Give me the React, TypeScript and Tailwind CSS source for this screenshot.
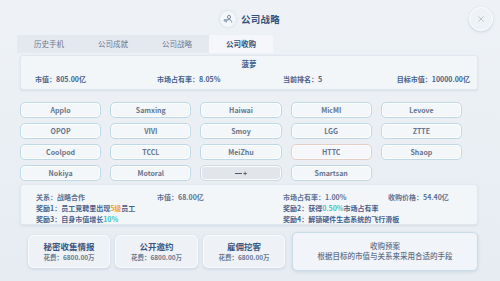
import { X } from 'lucide-react'

const tabs = ['历史手机', '公司成就', '公司战略', '公司收购']

const companies = [
  'Applo', 'Samxing', 'Haiwai', 'MicMI', 'Levove',
  'OPOP', 'VIVI', 'Smoy', 'LGG', 'ZTTE',
  'Coolpod', 'TCCL', 'MeiZhu', 'HTTC', 'Shaop',
  'Nokiya', 'Motoral', '—+', 'Smartsan',
]

const actions = [
  { title: '秘密收集情报', cost: '花费：6800.00万', w: 'w-[82px]' },
  { title: '公开邀约', cost: '花费：6800.00万', w: 'w-[83px]' },
  { title: '雇佣挖客', cost: '花费：6800.00万', w: 'w-[82px]' },
]

const TitleIcon = () => (
  <div className="w-[16px] h-[16px] rounded-full bg-[#f4f7fa] flex items-center justify-center shadow-[0_0_3px_rgba(150,170,190,0.4)]">
    <svg width="10" height="10" viewBox="0 0 10 10" fill="none" stroke="#6d7f96" strokeWidth="0.9">
      <circle cx="6" cy="3" r="1.6" />
      <path d="M3.2 8.6c0-1.8 1.2-3 2.8-3s2.8 1.2 2.8 3" />
      <circle cx="2" cy="6.4" r="0.9" />
      <path d="M2.8 6.1l1.4-0.6" />
    </svg>
  </div>
)

const CompanyButton = ({ name }: { name: string }) => {
  const empty = name === '—+'
  const warn = name === 'HTTC'
  return (
    <div
      className={`h-[16px] rounded-[5px] border flex items-center justify-center text-[7px] font-semibold shadow-[inset_0_0_0_1px_rgba(255,255,255,0.9)] ${
        empty
          ? 'bg-[#e2e6eb] border-[#d2d8de] text-[#4a5a70]'
          : warn
          ? 'bg-[#f5f7fa] border-[#e6cdc6] text-[#66758b]'
          : 'bg-[#f4f7fa] border-[#bdd8e6] text-[#66758b]'
      }`}
    >
      {empty ? (
        <span className="flex items-center gap-[1px]">
          <span className="w-[7px] h-[1px] bg-[#4a5a70]" />
          <span>+</span>
        </span>
      ) : (
        name
      )}
    </div>
  )
}

export default function App() {
  return (
    <div
      className="w-[500px] h-[281px] overflow-hidden bg-gradient-to-b from-[#eef2f6] to-[#e7ecf2] text-[#46608a]"
      style={{ fontFamily: '"Noto Sans CJK SC", "Noto Sans", sans-serif' }}
    >
      {/* Header */}
      <div className="relative h-[35px] flex items-center justify-center gap-[5px] pt-[3px]">
        <TitleIcon />
        <span className="text-[9.5px] font-bold text-[#34507a] tracking-[0.3px]">公司战略</span>
        <div className="absolute right-[7px] top-[7px] w-[24px] h-[24px] rounded-full bg-[#eef2f6] border border-white shadow-[0_1px_3px_rgba(140,160,185,0.35)] flex items-center justify-center">
          <X size={10} strokeWidth={1.5} className="text-[#a3adb9]" />
        </div>
      </div>

      {/* Tabs */}
      <div className="ml-[17px] flex h-[18px]">
        {tabs.map((t, i) => (
          <div
            key={t}
            className={`w-[64px] flex items-center justify-center text-[7.5px] ${
              i === 3
                ? 'bg-[#f5f7fa] text-[#34507a] font-bold rounded-t-[2px]'
                : 'bg-[#e4e9ef] text-[#6a7a8f]'
            }`}
          >
            {t}
          </div>
        ))}
      </div>

      {/* Target info */}
      <div className="mt-[2px] ml-[20px] w-[458px] h-[35px] rounded-[3px] bg-[#f3f6f9] border border-[#e1e7ee] shadow-[0_1px_2px_rgba(160,175,195,0.3)] flex flex-col">
        <div className="text-center text-[7.5px] font-semibold text-[#46608a] mt-[2px] leading-[12px]">菠萝</div>
        <div className="flex pl-[14px] pr-[7px] text-[7px] font-semibold leading-[10px] mt-[4px]">
          <span className="w-[122px]">市值：805.00亿</span>
          <span className="w-[126px]">市场占有率：8.05%</span>
          <span>当前排名：5</span>
          <span className="ml-auto">目标市值：10000.00亿</span>
        </div>
      </div>

      {/* Company grid */}
      <div className="mt-[12px] ml-[20px] w-[442px] grid grid-cols-5 gap-x-[9px] gap-y-[5px]">
        {companies.map(c => (
          <CompanyButton key={c} name={c} />
        ))}
      </div>

      {/* Selected info */}
      <div className="mt-[3px] ml-[20px] w-[458px] h-[41px] rounded-[3px] bg-[#f3f6f9] border border-[#e1e7ee] shadow-[0_1px_2px_rgba(160,175,195,0.3)] pl-[15px] pt-[7px] text-[7px] font-semibold leading-[11px]">
        <div className="grid grid-cols-[121px_126px_105px_1fr] text-[#5d7191]">
          <span>关系：战略合作</span>
          <span>市值：68.00亿</span>
          <span>市场占有率：1.00%</span>
          <span>收购价格：54.40亿</span>
        </div>
        <div className="grid grid-cols-[247px_1fr]">
          <span>
            奖励1：员工竞聘里出现<span className="text-[#f0a040]">5级</span>员工
          </span>
          <span>
            奖励2：获得<span className="text-[#3cc4c0]">0.50%</span>市场占有率
          </span>
        </div>
        <div className="grid grid-cols-[247px_1fr]">
          <span>
            奖励3：自身市值增长<span className="text-[#3cc4c0]">10%</span>
          </span>
          <span>奖励4：解锁硬件生态系统的飞行滑板</span>
        </div>
      </div>

      {/* Actions */}
      <div className="mt-[6px] ml-[28px] flex items-center h-[40px]">
        {actions.map((a, i) => (
          <div
            key={a.title}
            className={`${a.w} ${i > 0 ? 'ml-[5px]' : ''} h-[33px] rounded-[5px] bg-[#eef2f7] border border-[#f8fafc] shadow-[0_1px_3px_rgba(140,160,185,0.35)] flex flex-col items-center justify-center`}
          >
            <span className="text-[8.5px] font-bold text-[#3a5680] leading-[12px]">{a.title}</span>
            <span className="text-[6.5px] font-semibold text-[#6a7b92] leading-[9px] mt-[1px]">{a.cost}</span>
          </div>
        ))}
        <div className="ml-[7px] w-[186px] h-[39px] rounded-[5px] bg-[#f1f4f8] border border-[#c9dde9] shadow-[0_1px_3px_rgba(140,160,185,0.3)] flex flex-col items-center justify-center text-[7.5px] text-[#5f7088] font-medium leading-[10px]">
          <span>收购预案</span>
          <span>根据目标的市值与关系来采用合适的手段</span>
        </div>
      </div>
    </div>
  )
}
